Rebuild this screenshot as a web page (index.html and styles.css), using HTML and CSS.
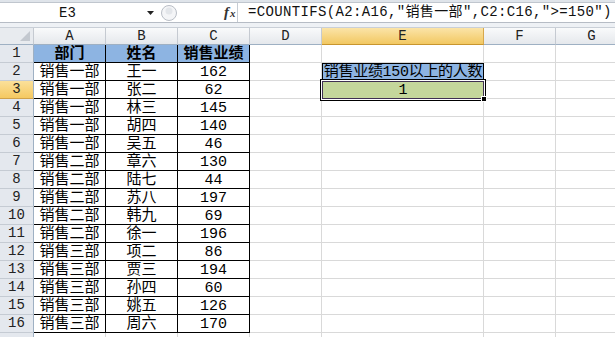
FILE: index.html
```html
<!DOCTYPE html>
<html lang="zh">
<head>
<meta charset="utf-8">
<link rel="stylesheet" href="styles.css">
</head>
<body>
<div class="app">
  <div class="topstrip"></div>
  <div class="fbar">
    <div class="namebox">
      <span class="nb-text">E3</span>
      <svg class="dd" width="7" height="4" viewBox="0 0 7 4"><path d="M0 0H7L3.5 4Z" fill="#222"/></svg>
    </div>
    <div class="knob">
      <svg width="18" height="18" viewBox="0 0 18 18"><circle cx="9" cy="9" r="7.5" fill="#f4f5f7" stroke="#b9bec6"/><circle cx="9" cy="7" r="3.5" fill="#e3e6ea"/></svg>
    </div>
    <div class="fx"><span class="f">f</span><span class="x">x</span></div>
    <div class="formula">=COUNTIFS(A2:A16,″销售一部″,C2:C16,″&gt;=150″)</div>
  </div>
  <div class="gap"></div>
  <div class="sheet">
    <div class="ch corner"><svg width="10" height="10" viewBox="0 0 10 10"><path d="M10 0V10H0Z" fill="#c3c8cf"/></svg></div>
    <div class="ch">A</div><div class="ch">B</div><div class="ch">C</div><div class="ch">D</div><div class="ch sel">E</div><div class="ch">F</div><div class="ch">G</div>

    <div class="rh">1</div><div class="c b hd">部门</div><div class="c b hd">姓名</div><div class="c b hd">销售业绩</div><div class="c"></div><div class="c"></div><div class="c"></div><div class="c"></div>
    <div class="rh">2</div><div class="c b">销售一部</div><div class="c b">王一</div><div class="c b n">162</div><div class="c"></div><div class="c lbl">销售业绩150以上的人数</div><div class="c"></div><div class="c"></div>
    <div class="rh rsel">3</div><div class="c b">销售一部</div><div class="c b">张二</div><div class="c b n">62</div><div class="c"></div><div class="c res">1<span class="handle"></span></div><div class="c"></div><div class="c"></div>
    <div class="rh">4</div><div class="c b">销售一部</div><div class="c b">林三</div><div class="c b n">145</div><div class="c"></div><div class="c"></div><div class="c"></div><div class="c"></div>
    <div class="rh">5</div><div class="c b">销售一部</div><div class="c b">胡四</div><div class="c b n">140</div><div class="c"></div><div class="c"></div><div class="c"></div><div class="c"></div>
    <div class="rh">6</div><div class="c b">销售一部</div><div class="c b">吴五</div><div class="c b n">46</div><div class="c"></div><div class="c"></div><div class="c"></div><div class="c"></div>
    <div class="rh">7</div><div class="c b">销售二部</div><div class="c b">章六</div><div class="c b n">130</div><div class="c"></div><div class="c"></div><div class="c"></div><div class="c"></div>
    <div class="rh">8</div><div class="c b">销售二部</div><div class="c b">陆七</div><div class="c b n">44</div><div class="c"></div><div class="c"></div><div class="c"></div><div class="c"></div>
    <div class="rh">9</div><div class="c b">销售二部</div><div class="c b">苏八</div><div class="c b n">197</div><div class="c"></div><div class="c"></div><div class="c"></div><div class="c"></div>
    <div class="rh">10</div><div class="c b">销售二部</div><div class="c b">韩九</div><div class="c b n">69</div><div class="c"></div><div class="c"></div><div class="c"></div><div class="c"></div>
    <div class="rh">11</div><div class="c b">销售二部</div><div class="c b">徐一</div><div class="c b n">196</div><div class="c"></div><div class="c"></div><div class="c"></div><div class="c"></div>
    <div class="rh">12</div><div class="c b">销售三部</div><div class="c b">项二</div><div class="c b n">86</div><div class="c"></div><div class="c"></div><div class="c"></div><div class="c"></div>
    <div class="rh">13</div><div class="c b">销售三部</div><div class="c b">贾三</div><div class="c b n">194</div><div class="c"></div><div class="c"></div><div class="c"></div><div class="c"></div>
    <div class="rh">14</div><div class="c b">销售三部</div><div class="c b">孙四</div><div class="c b n">60</div><div class="c"></div><div class="c"></div><div class="c"></div><div class="c"></div>
    <div class="rh">15</div><div class="c b">销售三部</div><div class="c b">姚五</div><div class="c b n">126</div><div class="c"></div><div class="c"></div><div class="c"></div><div class="c"></div>
    <div class="rh">16</div><div class="c b">销售三部</div><div class="c b">周六</div><div class="c b n">170</div><div class="c"></div><div class="c"></div><div class="c"></div><div class="c"></div>
    <div class="rh"></div><div class="c"></div><div class="c"></div><div class="c"></div><div class="c"></div><div class="c"></div><div class="c"></div><div class="c"></div>
  </div>
</div>
</body>
</html>
```

FILE: styles.css
```css
* { box-sizing: border-box; }
html, body { margin: 0; padding: 0; }
body { width: 615px; height: 337px; overflow: hidden; background: #fff; }

.app { width: 615px; height: 337px; overflow: hidden; display: flex; flex-direction: column; }

.topstrip { height: 3px; background: #dfe4ea; border-bottom: 1px solid #c0c6ce; flex: none; }

.fbar { height: 20px; flex: none; display: flex; align-items: stretch; background: #fff; border-bottom: 1px solid #b6bcc5; }
.namebox { width: 158px; display: flex; align-items: center; }
.nb-text { flex: 1; text-align: center; font: 14px "Liberation Mono", monospace; color: #111; padding-right: 12px; }
.dd { margin-right: 4px; }
.knob { width: 66px; display: flex; align-items: center; padding-left: 2px; }
.fx { width: 14px; display: flex; align-items: center; border-right: 1px solid #c6ccd4; font-family: "Liberation Serif", serif; font-style: italic; font-weight: bold; color: #333; }
.fx .f { font-size: 15px; }
.fx .x { font-size: 11px; margin-left: 1px; }
.formula { flex: 1; padding-left: 10px; font: 14px/19px "Liberation Mono", "Noto Sans CJK SC", monospace; letter-spacing: 0.35px; color: #111; white-space: nowrap; }

.gap { height: 5px; flex: none; background: #eef1f5; border-bottom: 1px solid #c9cfd7; }

.sheet {
  flex: none;
  display: grid;
  grid-template-columns: 34px 72px 72px 72px 72px 162px 72px 72px;
  grid-template-rows: 17px repeat(17, 18px);
  font: 15px/15px "Liberation Mono", "Noto Sans CJK SC", monospace;
  color: #000;
}

.ch {
  background: linear-gradient(#f9fafb, #e5e8ec);
  border-right: 1px solid #c5cad1;
  border-bottom: 1px solid #9eb0c3;
  font: 14px/16px "Liberation Mono", monospace;
  color: #222;
  text-align: center;
}
.ch.corner { display: flex; align-items: flex-end; justify-content: flex-end; padding: 0 3px 3px 0; background: #e8ebef; }
.ch.sel { background: linear-gradient(#fbe4a8, #f2c862); border-right-color: #d7a84c; border-bottom-color: #c8952e; }

.rh {
  background: #e4e8ee;
  border-right: 1px solid #9eb0c3;
  border-bottom: 1px solid #c5cbd3;
  font: 14px/17px "Liberation Mono", monospace;
  color: #222;
  text-align: center;
}
.rh.rsel { background: linear-gradient(#fbe09a, #f5c961); border-bottom-color: #d0a24a; }

.c {
  border-right: 1px solid #d9d9d9;
  border-bottom: 1px solid #d9d9d9;
  white-space: nowrap;
  text-align: center;
  padding-top: 2px;
}
.c.b { border-right-color: #000; border-bottom-color: #000; }
.c.hd { background: #8db4e2; font-weight: bold; }

.lbl { background: #8db4e2; border: 1px solid #000; letter-spacing: -0.3px; padding-top: 1px; }
.res {
  background: #c4d79b;
  border: 1px solid #3f3151;
  box-shadow: 0 0 0 1px #fff, 0 0 0 2px #000;
  position: relative;
  z-index: 2;
  padding-top: 1px;
}
.handle { position: absolute; right: -4px; bottom: -4px; width: 6px; height: 6px; background: #000; border: 1px solid #fff; }
```
